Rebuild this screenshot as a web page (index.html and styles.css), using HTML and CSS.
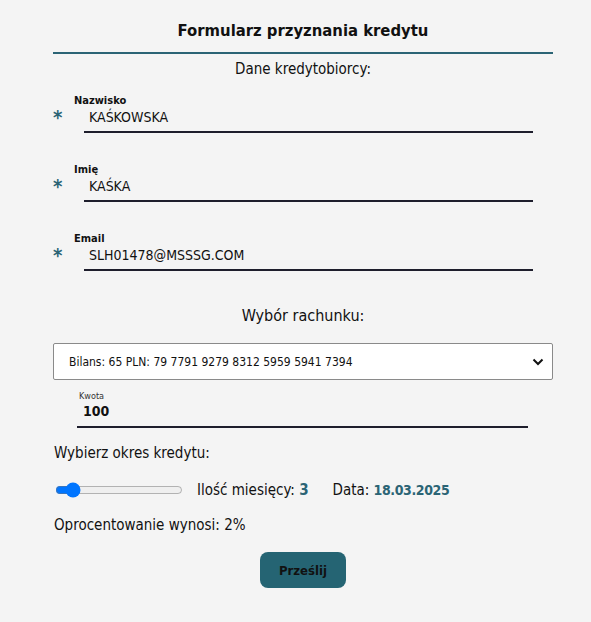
FILE: index.html
```html
<!DOCTYPE html>
<html lang="pl">
<head>
<meta charset="utf-8">
<link rel="stylesheet" href="styles.css">
</head>
<body>
<form class="form">
  <h1 class="title">Formularz przyznania kredytu</h1>
  <div class="rule"></div>
  <h2 class="subtitle">Dane kredytobiorcy:</h2>

  <div class="field">
    <span class="star">*</span>
    <div class="control">
      <label class="label">Nazwisko</label>
      <input class="input" type="text" value="KAŚKOWSKA">
    </div>
  </div>
  <div class="field">
    <span class="star">*</span>
    <div class="control">
      <label class="label">Imię</label>
      <input class="input" type="text" value="KAŚKA">
    </div>
  </div>
  <div class="field">
    <span class="star">*</span>
    <div class="control">
      <label class="label">Email</label>
      <input class="input" type="text" value="SLH01478@MSSSG.COM">
    </div>
  </div>

  <h2 class="section">Wybór rachunku:</h2>
  <div class="select">
    <span>Bilans: 65 PLN: 79 7791 9279 8312 5959 5941 7394</span>
    <svg class="chev" width="12" height="8" viewBox="0 0 12 8"><path d="M1.5 1.5 L6 6 L10.5 1.5" fill="none" stroke="#111" stroke-width="2"/></svg>
  </div>

  <div class="amount">
    <label class="small-label">Kwota</label>
    <input class="amount-input" type="text" value="100">
  </div>

  <p class="text">Wybierz okres kredytu:</p>
  <div class="period">
    <input class="range" type="range" min="1" max="24" value="3">
    <span class="stat">Ilość miesięcy: <b class="accent">3</b></span>
    <span class="stat">Data: <b class="accent date">18.03.2025</b></span>
  </div>
  <p class="text medium">Oprocentowanie wynosi: 2%</p>

  <div class="actions">
    <button class="btn" type="button">Prześlij</button>
  </div>
</form>
</body>
</html>
```

FILE: styles.css
```css
html, body {
  margin: 0;
  background: #f4f4f4;
}
body {
  font-family: "DejaVu Sans Condensed", "DejaVu Sans", sans-serif;
  font-stretch: condensed;
  color: #111;
}
.form {
  width: 500px;
  margin-left: 53px;
  padding-top: 18px;
}
.title {
  margin: 0;
  font-size: 16.5px;
  line-height: 26px;
  font-weight: bold;
  text-align: center;
}
.rule {
  height: 2px;
  background: #2b6475;
  margin-top: 8px;
}
.subtitle {
  margin: 5px 0 0;
  font-size: 15px;
  line-height: 20px;
  font-weight: normal;
  text-align: center;
}
.field {
  display: flex;
  align-items: flex-start;
  margin-top: 16px;
  height: 60px;
}
.field + .field { margin-top: 9px; }
.star {
  width: 21px;
  padding-top: 12px;
  font-size: 20px;
  line-height: 20px;
  color: #2b6475;
  font-weight: bold;
}
.control {
  display: flex;
  flex-direction: column;
}
.label {
  font-size: 11px;
  line-height: 12px;
  font-weight: bold;
}
.input {
  margin-left: 10px;
  width: 449px;
  box-sizing: border-box;
  border: none;
  border-bottom: 2px solid #1e1e2c;
  background: transparent;
  font-family: inherit;
  font-stretch: condensed;
  font-size: 14px;
  line-height: 18px;
  padding: 1px 5px 5px;
  color: #111;
  outline: none;
}
.section {
  margin: 13px 0 0;
  font-size: 16px;
  line-height: 20px;
  font-weight: normal;
  text-align: center;
}
.select {
  margin-top: 17px;
  height: 37px;
  box-sizing: border-box;
  border: 1px solid #8a8a8a;
  border-radius: 2px;
  background: #fff;
  display: flex;
  align-items: center;
  justify-content: space-between;
  padding: 0 8px 0 15px;
  font-size: 12px;
}
.amount {
  margin-left: 24px;
  width: 451px;
  display: flex;
  flex-direction: column;
  margin-top: 10px;
}
.small-label {
  font-size: 9px;
  line-height: 12px;
  color: #333;
  margin-left: 2px;
}
.amount-input {
  border: none;
  border-bottom: 2px solid #1e1e2c;
  background: transparent;
  font-family: inherit;
  font-stretch: condensed;
  font-size: 14px;
  font-weight: 600;
  line-height: 18px;
  padding: 0 6px 6px;
  outline: none;
  color: #111;
}
.text {
  margin: 15px 0 0 1px;
  font-size: 15px;
  line-height: 20px;
}
.medium { font-weight: 500; }
.period {
  display: flex;
  align-items: center;
  gap: 14px;
  margin-top: 18px;
  font-size: 15px;
}
.range {
  width: 128px;
  margin: 0 0 0 2px;
}
.stat { font-weight: 500; }
.stat + .stat { margin-left: 10px; }
.accent { color: #2b6475; }
.date {
  font-size: 14px;
  letter-spacing: -0.4px;
}
.period + .text { margin-top: 16px; }
.actions {
  display: flex;
  justify-content: center;
  margin-top: 17px;
}
.btn {
  width: 86px;
  height: 36px;
  border: none;
  border-radius: 8px;
  background: #256473;
  font-family: inherit;
  font-stretch: condensed;
  font-size: 13px;
  font-weight: bold;
  color: #111;
}
```
